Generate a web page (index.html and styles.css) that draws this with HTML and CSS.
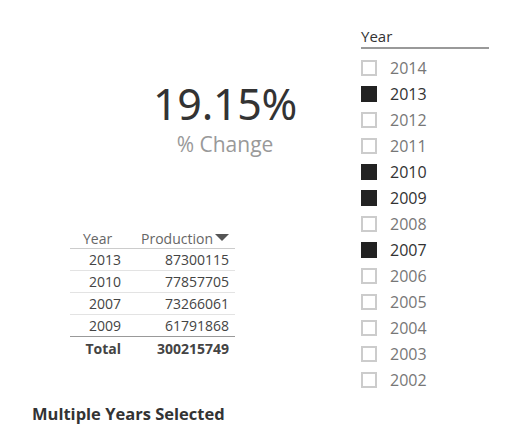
FILE: index.html
```html
<!DOCTYPE html>
<html>
<head>
<meta charset="utf-8">
<link rel="stylesheet" href="styles.css">
</head>
<body>
<div class="page">
  <div class="main">
    <div class="left">
      <div class="card">
        <div class="kpi">19.15%</div>
        <div class="kpi-label">% Change</div>
      </div>
      <table class="grid">
        <colgroup><col class="col-year"><col class="col-prod"></colgroup>
        <thead>
          <tr><th class="c-year">Year</th><th class="c-prod">Production<span class="sort"></span></th></tr>
        </thead>
        <tbody>
          <tr><td class="c-year">2013</td><td class="c-prod">87300115</td></tr>
          <tr><td class="c-year">2010</td><td class="c-prod">77857705</td></tr>
          <tr><td class="c-year">2007</td><td class="c-prod">73266061</td></tr>
          <tr><td class="c-year">2009</td><td class="c-prod">61791868</td></tr>
        </tbody>
        <tfoot>
          <tr><td class="c-year">Total</td><td class="c-prod">300215749</td></tr>
        </tfoot>
      </table>
    </div>
    <div class="slicer">
      <div class="slicer-title">Year</div>
      <ul class="items">
        <li><span class="box"></span>2014</li>
        <li class="on"><span class="box"></span>2013</li>
        <li><span class="box"></span>2012</li>
        <li><span class="box"></span>2011</li>
        <li class="on"><span class="box"></span>2010</li>
        <li class="on"><span class="box"></span>2009</li>
        <li><span class="box"></span>2008</li>
        <li class="on"><span class="box"></span>2007</li>
        <li><span class="box"></span>2006</li>
        <li><span class="box"></span>2005</li>
        <li><span class="box"></span>2004</li>
        <li><span class="box"></span>2003</li>
        <li><span class="box"></span>2002</li>
      </ul>
    </div>
  </div>
  <div class="caption">Multiple Years Selected</div>
</div>
</body>
</html>
```

FILE: styles.css
```css
html, body {
  margin: 0;
  padding: 0;
  background: #ffffff;
}
.page {
  width: 510px;
  height: 437px;
  font-family: "Open Sans", sans-serif;
  color: #333;
}
.main {
  display: flex;
  height: 400px;
}
.left {
  width: 361px;
  display: flex;
  flex-direction: column;
}
.card {
  width: 450px;
  padding-top: 80px;
  display: flex;
  flex-direction: column;
  align-items: center;
}
.kpi {
  font-family: "Noto Sans", sans-serif;
  font-size: 43px;
  line-height: 48px;
  letter-spacing: -0.3px;
  color: #333;
}
.kpi-label {
  font-size: 21px;
  line-height: 28px;
  color: #999;
  margin-top: 2px;
}
.grid {
  margin-top: 68px;
  margin-left: 70px;
  width: 165px;
  table-layout: fixed;
  border-collapse: collapse;
  font-size: 14px;
  color: #444;
}
.col-year { width: 51px; }
.col-prod { width: 114px; }
.grid th {
  font-weight: 400;
  color: #666;
  height: 22px;
  padding: 0;
  border-bottom: 1px solid #ccc;
  vertical-align: bottom;
  line-height: 18px;
}
.grid td {
  height: 21px;
  padding: 0;
  border-bottom: 1px solid #e3e3e3;
  line-height: 20px;
}
.grid th.c-year { text-align: left; padding-left: 13px; }
.grid td.c-year { text-align: right; padding-right: 0; }
.grid th.c-prod { text-align: right; padding-right: 6px; white-space: nowrap; }
.grid td.c-prod { text-align: right; padding-right: 6px; }
.grid tbody tr:last-child td { border-bottom: 1px solid #999; }
.grid tfoot td { font-weight: 700; border-bottom: none; height: 23px; }
.sort {
  display: inline-block;
  width: 0;
  height: 0;
  border-left: 7px solid transparent;
  border-right: 7px solid transparent;
  border-top: 7px solid #555;
  margin-left: 2px;
  vertical-align: 3px;
}
.slicer {
  width: 128px;
  padding-top: 27px;
}
.slicer-title {
  font-size: 15px;
  line-height: 19px;
  color: #333;
  border-bottom: 2px solid #999;
  padding-bottom: 1px;
}
.items {
  list-style: none;
  margin: 0;
  padding: 0;
  padding-top: 6px;
}
.items li {
  display: flex;
  align-items: center;
  height: 26px;
  font-size: 16px;
  color: #777;
}
.items li.on { color: #333; }
.box {
  width: 16px;
  height: 16px;
  box-sizing: border-box;
  border: 2px solid #ccc;
  margin-right: 13px;
}
.items li.on .box {
  background: #222;
  border-color: #222;
}
.caption {
  padding-left: 32px;
  font-size: 16.5px;
  font-weight: 700;
  color: #333;
  line-height: 20px;
  margin-top: 4px;
}
```
